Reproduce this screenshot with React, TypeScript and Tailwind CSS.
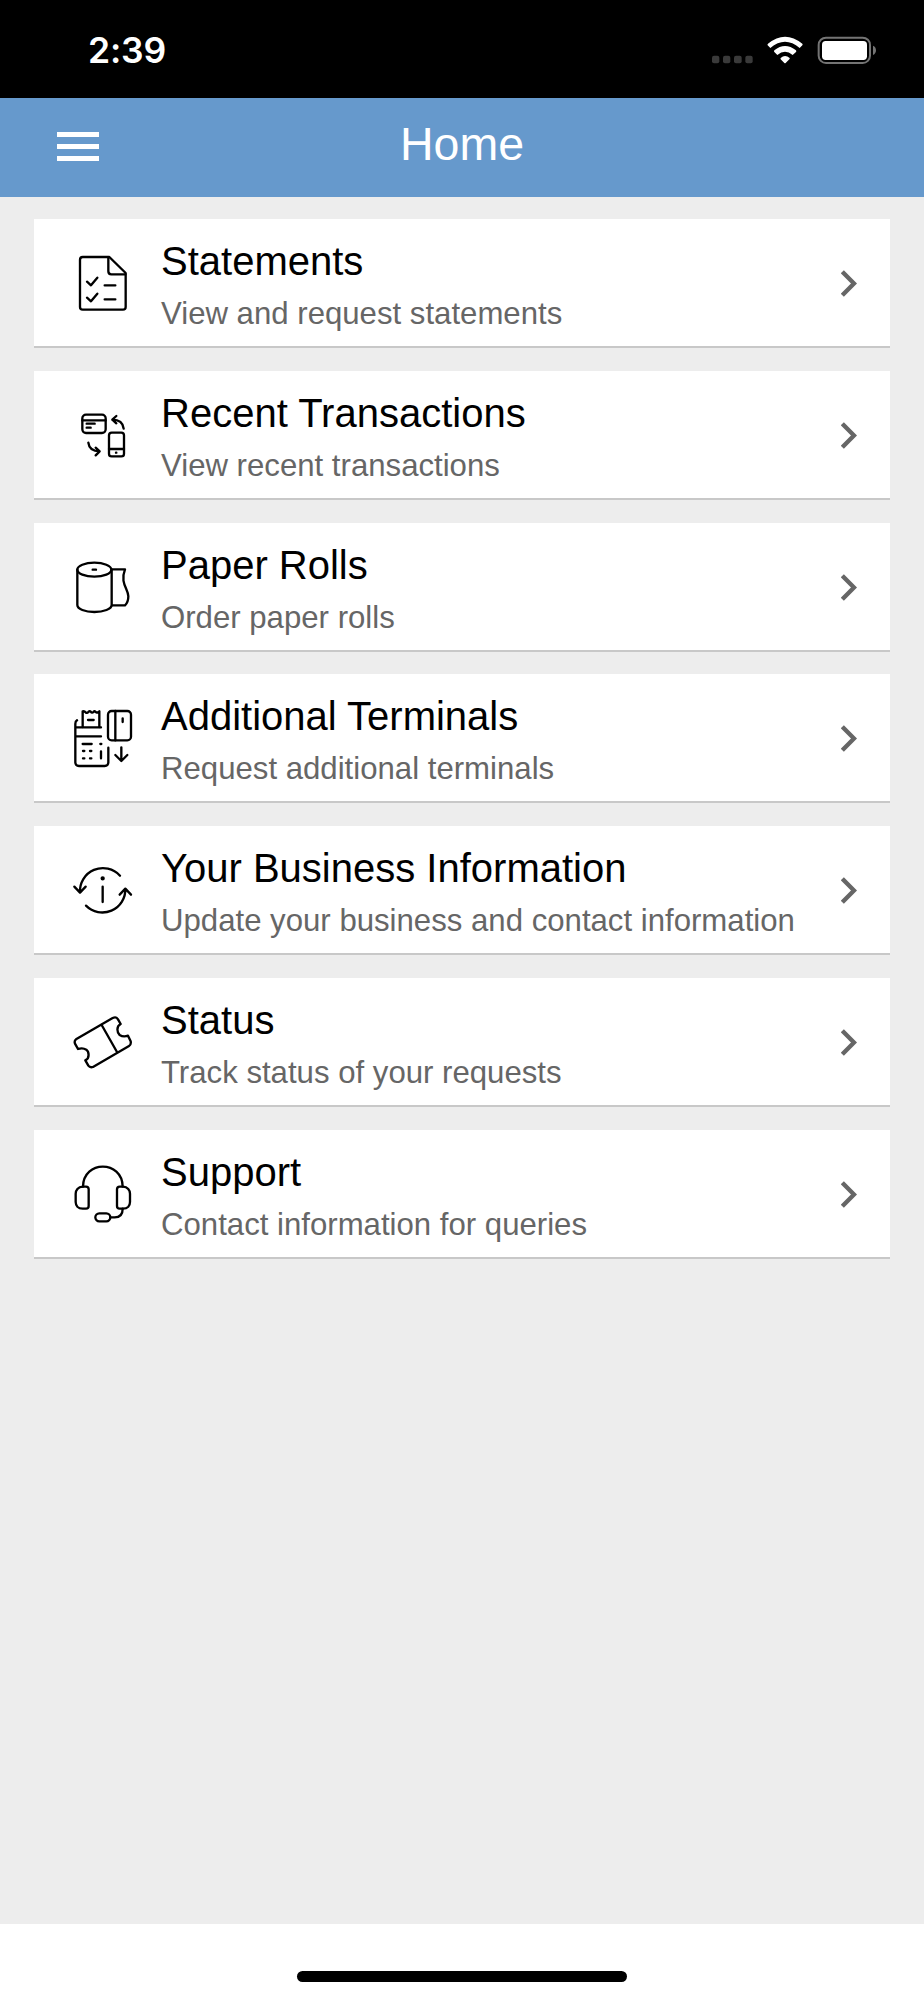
import { ReactNode } from "react";

interface MenuItem {
    title: string;
    description: string;
    viewBox: string;
    icon: ReactNode;
}

const items: MenuItem[] = [
    {
        title: 'Statements',
        description: 'View and request statements',
        viewBox: '0 -3 270 270',
        icon: <>
            <path d="M148 51H68Q60 51 60 59V201Q60 209 68 209H189Q197 209 197 201V99Z" />
            <path d="M145 52V94Q145 103 154 103H196M81 125L93 136L112 113M81 173L93 184L112 161M134 136H166M134 178H166" />
        </>
    },
    {
        title: 'Recent Transactions',
        description: 'View recent transactions',
        viewBox: '0 2 270 270',
        icon: <>
            <rect x="67" y="73" width="70" height="55" rx="11" />
            <path d="M67 90H137M80 100H104M80 112H92" />
            <rect x="147" y="127" width="45" height="71" rx="8" />
            <path d="M147 176H192M168 187H169" />
            <path d="M191 115Q188 88 157 88M169 77L157 88L169 99M85 157Q88 183 119 183M107 172L119 183L107 195" />
        </>
    },
    {
        title: 'Paper Rolls',
        description: 'Order paper rolls',
        viewBox: '0 -7 270 270',
        icon: <>
            <ellipse cx="103" cy="73" rx="51" ry="21" />
            <path d="M52 73V179C52 191 75 200 103 200S155 191 155 179V73M98 73H108" />
            <path d="M156 72H195C179 113 205 131 205 153Q205 171 195 180H156" />
        </>
    },
    {
        title: 'Additional Terminals',
        description: 'Request additional terminals',
        viewBox: '0 -2 270 270',
        icon: <>
            <path d="M51 77Q46 80 46 87V203Q46 214 57 214H134Q145 214 145 203V159M46 98H123M46 125H123" />
            <path d="M68 97V50Q74 49 77 53Q81 57 86 51Q89 48 92 51Q96 57 101 51Q104 48 107 52Q111 56 118 50V97M84 76H101" />
            <path d="M68 148H95M121 148H124M69 169H73M90 169H94M69 191H73M90 191H94M123 170V191" />
            <rect x="144" y="49" width="69" height="88" rx="11" />
            <path d="M166 49V137M188 71V82M184 158V199M166 181L184 199L202 181" />
        </>
    },
    {
        title: 'Your Business Information',
        description: 'Update your business and contact information',
        viewBox: '0 3 270 270',
        icon: <>
            <path d="M180 92A69 69 0 0 0 60 143M43 125L60 143L77 125" />
            <path d="M78 182A69 69 0 0 0 196 131M179 149L196 131L213 149" />
            <path d="M128 125V171" />
            <circle cx="128" cy="100" r="3" fill="currentColor" />
        </>
    },
    {
        title: 'Status',
        description: 'Track status of your requests',
        viewBox: '0 -6 270 270',
        icon: <>
            <path d="M48 118L158 54Q169 49 174 58L182 72C168 79 171 98 179 105Q190 112 204 107L212 124Q214 134 207 138L99 201Q90 204 85 197L76 181C90 174 87 155 79 149Q68 142 54 147L45 131Q42 123 48 118Z" />
            <path d="M125 75L171 156" />
        </>
    },
    {
        title: 'Support',
        description: 'Contact information for queries',
        viewBox: '0 0 270 270',
        icon: <>
            <path d="M69 110C70 30 187 30 188 110" />
            <path d="M78 110H68C54 110 47 121 47 131V156C47 166 54 176 68 176H78Q86 176 86 168V118Q86 110 78 110Z" />
            <path d="M179 110H189C203 110 210 121 210 131V156C210 166 203 176 189 176H179Q171 176 171 168V118Q171 110 179 110Z" />
            <rect x="106" y="190" width="45" height="24" rx="12" />
            <path d="M151 202H164Q188 202 188 176" />
        </>
    }
];

const StatusBar = () => {
    return <div className="h-[98px] bg-black flex flex-row items-start justify-between pl-[88px] pr-[47px]">
        <p className="pt-[29px] text-white text-[35.5px] leading-[44px] tracking-[-0.2px] font-semibold font-['Inter',sans-serif]">2:39</p>
        <svg className="mt-5 w-[200px] h-[70px] -mr-[13px]" viewBox="0 0 600 210" fill="none">
            <g fill="#3a3a3a">
                <rect x="66" y="107" width="22" height="23" rx="6" />
                <rect x="99" y="107" width="22" height="23" rx="6" />
                <rect x="132" y="107" width="23" height="23" rx="6" />
                <rect x="166" y="107" width="22" height="23" rx="6" />
            </g>
            <g fill="white">
                <path d="M234 71Q285 29 337 71Q339 74 337 76L329 84Q285 47 241 84L233 76Q231 74 234 71Z" />
                <path d="M253 91Q285 65 318 91Q320 94 318 96L308 105Q285 86 262 105L253 96Q251 94 253 91Z" />
                <path d="M272 114Q285 102 299 114Q300 116 298 118L287 129Q285 131 283 129L272 118Q271 116 272 114Z" />
            </g>
            <rect x="386" y="53" width="154" height="76" rx="22" stroke="#747474" strokeWidth="6" />
            <rect x="396" y="63" width="135" height="57" rx="11" fill="white" />
            <path d="M549 77Q558 81 558 91T549 105Z" fill="#747474" />
        </svg>
    </div>
}

const Header = () => {
    return <header className="h-[99px] bg-[#6699cc] grid grid-cols-3 items-center">
        <button className="ml-[57px] mt-[-2px] w-[42px] flex flex-col gap-[7px]" aria-label="Menu">
            <span className="w-full h-[5px] bg-white" />
            <span className="w-full h-[5px] bg-white" />
            <span className="w-full h-[5px] bg-white" />
        </button>
        <h1 className="text-white text-center text-[46.5px] leading-[54px] -mt-[7px]">Home</h1>
    </header>
}

const MenuCard = ({ title, description, viewBox, icon }: MenuItem) => {
    return <li className="h-[129px] bg-white border-b-2 border-[#c8c8c8] flex flex-row items-start pl-[26px] pr-[33px]">
        <svg className="mt-5 size-[90px] shrink-0 text-black" viewBox={viewBox} fill="none" stroke="currentColor" strokeWidth="7" strokeLinecap="round" strokeLinejoin="round">
            {icon}
        </svg>
        <div className="grow pl-[11px] pt-[19px] whitespace-nowrap">
            <p className="text-black text-[40px] leading-[46px]">{title}</p>
            <p className="text-[#666666] text-[31.17px] leading-[36px] mt-[12px]">{description}</p>
        </div>
        <svg className="mt-[51px] w-4 h-[27px] shrink-0" viewBox="0 0 48 81" fill="none" stroke="#666666" strokeWidth="13">
            <path d="M4 5L39 40.5L4 76" />
        </svg>
    </li>
}

export default function App() {
    return <div className="w-full h-[2000px] flex flex-col bg-[#ededed] font-['Liberation_Sans',Arial,sans-serif]">
        <StatusBar />
        <Header />
        <main className="grow pt-[22px] px-[34px]">
            <ul className="flex flex-col gap-[22.75px]">
                {items.map((item) => <MenuCard key={item.title} {...item} />)}
            </ul>
        </main>
        <footer className="h-[76px] bg-white flex flex-row justify-center items-end pb-[18px]">
            <div className="w-[330px] h-[11px] rounded-full bg-black" />
        </footer>
    </div>
}
